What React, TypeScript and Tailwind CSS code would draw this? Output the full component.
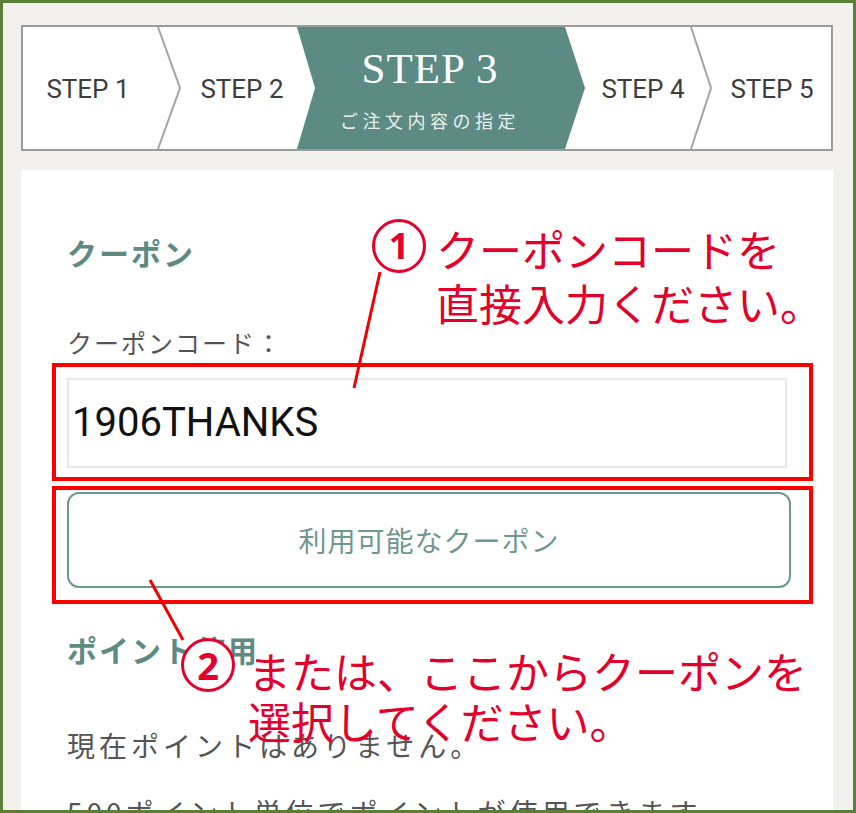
import React from "react";

function StepBar() {
  return (
    <div className="relative h-[126px] border-2 border-[#9b9b9b] bg-white">
      <svg className="absolute inset-0" width="808" height="122" viewBox="0 0 808 122">
        <polygon points="274,0 542,0 562,61 542,122 274,122 292,61" fill="#5c8b83" />
        <polyline points="135,0 157,61 135,122" fill="none" stroke="#a3a3a3" strokeWidth="2" />
        <polyline points="668,0 688,61 668,122" fill="none" stroke="#a3a3a3" strokeWidth="2" />
      </svg>
      <div className="relative flex h-full items-center font-['Roboto','Liberation_Sans',sans-serif] text-[26px] text-[#3d3d3d]">
        <span className="ml-[15px] mt-[3px] w-[100px] shrink-0 text-center whitespace-nowrap">STEP 1</span>
        <span className="ml-[54px] mt-[3px] w-[100px] shrink-0 text-center whitespace-nowrap">STEP 2</span>
        <div className="ml-[38px] flex h-full w-[200px] shrink-0 flex-col items-center pt-[20px] text-white">
          <span className="font-['Liberation_Serif',serif] text-[43px] leading-[44px] tracking-[1px] whitespace-nowrap">
            STEP 3
          </span>
          <span className="mt-[15px] font-['Noto_Sans_CJK_JP',sans-serif] text-[18px] leading-[28px] tracking-[4.5px] text-[#e9f0ee] whitespace-nowrap">
            ご注文内容の指定
          </span>
        </div>
        <span className="ml-[63px] mt-[3px] w-[100px] shrink-0 text-center whitespace-nowrap">STEP 4</span>
        <span className="ml-[29px] mt-[3px] w-[100px] shrink-0 text-center whitespace-nowrap">STEP 5</span>
      </div>
    </div>
  );
}

function Annotations() {
  const red = "text-[#e4002b]";
  return (
    <div className="pointer-events-none absolute left-[-3px] top-[-3px] h-[813px] w-[856px] font-['Noto_Sans_CJK_JP',sans-serif]">
      <div className="absolute left-[52px] top-[363px] h-[118px] w-[761px] border-4 border-[#ff0000]" />
      <div className="absolute left-[52px] top-[486px] h-[118px] w-[761px] border-4 border-[#ff0000]" />
      <svg className="absolute inset-0" width="856" height="813" viewBox="0 0 856 813">
        <line x1="380" y1="272" x2="354" y2="388" stroke="#f00000" strokeWidth="3" />
        <line x1="150" y1="580" x2="183" y2="640" stroke="#f00000" strokeWidth="3" />
      </svg>
      <div className="absolute left-[372px] top-[219px] flex h-[54px] w-[54px] items-center justify-center rounded-full border-[3px] border-[#e4002b] bg-white">
        <span className={`font-['Noto_Sans',sans-serif] text-[36px] font-bold leading-none ${red}`}>1</span>
      </div>
      <div className={`absolute left-[436px] top-[221px] text-[43px] leading-[54px] whitespace-nowrap ${red}`}>
        <div>クーポンコードを</div>
        <div>直接入力ください。</div>
      </div>
      <div className="absolute left-[181px] top-[638px] flex h-[54px] w-[54px] items-center justify-center rounded-full border-[3px] border-[#e4002b] bg-white">
        <span className={`font-['Noto_Sans',sans-serif] text-[38px] font-bold leading-none ${red}`}>2</span>
      </div>
      <div className={`absolute left-[248px] top-[645px] text-[43px] leading-[50px] whitespace-nowrap ${red}`}>
        <div>または、ここからクーポンを</div>
        <div>選択してください。</div>
      </div>
    </div>
  );
}

export default function App() {
  return (
    <div className="relative h-[813px] w-[856px] overflow-hidden border-[3px] border-[#5b7f36] bg-[#f2f1ed] pl-[18px] pr-[20px] pt-[22px] font-['Noto_Sans_CJK_JP',sans-serif]">
      <StepBar />
      <div className="mt-[19px] h-[700px] bg-white pl-[46px] pr-[42px] pt-[62px]">
        <h2 className="text-[30px] font-bold leading-[40px] tracking-[2px] text-[#5d8b83]">クーポン</h2>
        <p className="mt-[52px] text-[25px] leading-[36px] tracking-[2px] text-[#555555]">クーポンコード：</p>
        <div className="mt-[18px] flex h-[90px] w-[720px] items-center border-2 border-[#e8e8e8] pl-[3px] font-['Roboto','Liberation_Sans',sans-serif] text-[40px] text-[#111111]">
          1906THANKS
        </div>
        <div className="mt-[24px] flex h-[96px] items-center justify-center rounded-[12px] border-2 border-[#6e9790] text-[28px] tracking-[1px] text-[#6f9891]">
          利用可能なクーポン
        </div>
        <h2 className="mt-[41px] text-[30px] font-bold leading-[40px] tracking-[2px] text-[#5d8b83]">ポイント使用</h2>
        <p className="mt-[56px] text-[28px] leading-[40px] tracking-[4px] text-[#555555] whitespace-nowrap">
          現在ポイントはありません。
        </p>
        <p className="mt-[27px] text-[28px] leading-[40px] tracking-[4px] text-[#555555] whitespace-nowrap">
          500ポイント単位でポイントが使用できます。
        </p>
      </div>
      <Annotations />
    </div>
  );
}
